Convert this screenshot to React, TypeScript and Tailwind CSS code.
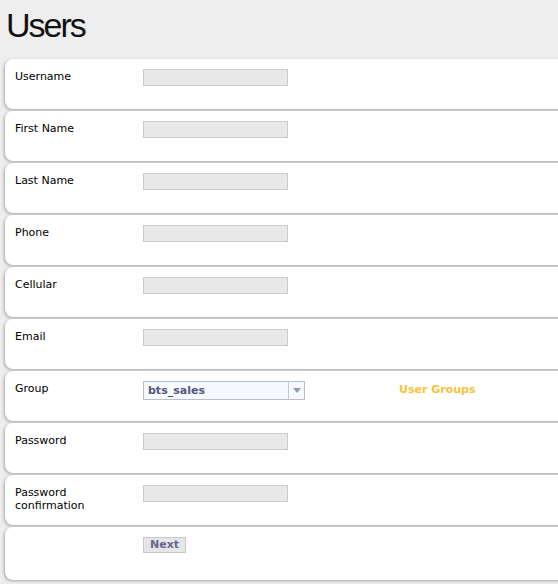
const rows = [
  "Username",
  "First Name",
  "Last Name",
  "Phone",
  "Cellular",
  "Email",
  "Group",
  "Password",
  "Password confirmation",
];

function Field({ label }: { label: string }) {
  if (label === "Group") {
    return (
      <div className="flex items-start">
        <div className="flex h-[19px] w-[162px] border border-[#b7bfcd] bg-[#f6f9fd]">
          <span className="flex-1 pl-[4px] text-[11px] font-bold leading-[17px] text-[#55557f]">
            bts_sales
          </span>
          <span className="flex w-[16px] items-center justify-center border-l border-[#c5cbd6]">
            <svg width="8" height="5" viewBox="0 0 8 5">
              <path d="M0 0h8L4 5z" fill="#8b9bc4" />
            </svg>
          </span>
        </div>
        <span className="ml-[94px] mt-[1px] text-[11px] font-bold text-[#f9c23c]">User Groups</span>
      </div>
    );
  }
  return <div className="h-[17px] w-[145px] border border-[#cbcbcb] bg-[#e8e8e8]" />;
}

export default function App() {
  return (
    <div className="min-h-[584px] overflow-hidden bg-[#eeeeee] pb-[4px] font-['DejaVu_Sans',Verdana,sans-serif] text-black">
      <h1 className="pl-[6px] pt-[3px] font-['Liberation_Sans',Arial,sans-serif] text-[34px] leading-[44px] tracking-[-2px] text-[#111]">
        Users
      </h1>
      <div className="-mr-[12px] ml-[5px] mt-[12px] flex flex-col gap-[2px]">
        {rows.map((r) => (
          <div
            key={r}
            className="flex h-[50px] rounded-l-[8px] bg-white px-[10px] pt-[10px] shadow-[-1px_1px_3px_rgba(0,0,0,0.3)]"
          >
            <div className="w-[128px] pt-[1px] text-[11px] leading-[13px]">
              {r === "Password confirmation" ? (
                <>
                  Password
                  <br />
                  confirmation
                </>
              ) : (
                r
              )}
            </div>
            <Field label={r} />
          </div>
        ))}
        <div className="flex h-[53px] rounded-l-[8px] bg-white pl-[138px] pt-[10px] shadow-[-1px_1px_3px_rgba(0,0,0,0.3)]">
          <button className="h-[16px] border border-[#c8c8c8] bg-[#e6e6e6] px-[6px] text-[11px] font-bold leading-[14px] text-[#65658f]">
            Next
          </button>
        </div>
      </div>
    </div>
  );
}
